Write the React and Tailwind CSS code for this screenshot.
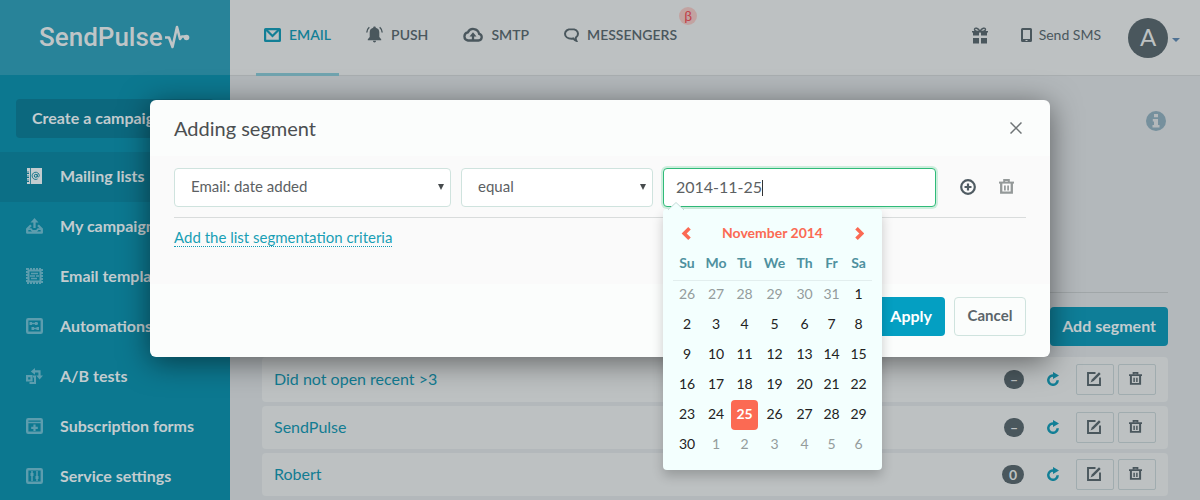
import React, { useState } from "react";

function MailIcon() {
  return (
    <svg width="17" height="14" viewBox="0 0 17 14" fill="none" stroke="currentColor" strokeWidth="2.200">
      <rect x="1.100" y="1.100" width="14.800" height="11.800" rx="0.5" />
      <path d="M2 1.500L8.500 8L15 1.500" />
    </svg>
  );
}

function BellIcon() {
  return (
    <svg width="17" height="17" viewBox="0 0 17 17" fill="currentColor">
      <path d="M8.500 0.500c.8 0 1.300.5 1.300 1.200c2.300.6 3.500 2.200 3.500 4.500v4.800l1.900 2.300v.9h-13.400v-.9l1.900-2.300v-4.800c0-2.300 1.200-3.900 3.500-4.500c0-.7.5-1.200 1.300-1.200z" />
      <path d="M7 14.800h3c0 .9-.6 1.600-1.500 1.600s-1.500-.7-1.500-1.600z" />
      <path d="M0.800 6.500c.1-2.200 1-3.900 2.500-5.200M16.200 6.500c-.1-2.200-1-3.900-2.500-5.200" fill="none" stroke="currentColor" strokeWidth="1.400" />
    </svg>
  );
}

function CloudIcon() {
  return (
    <svg width="20" height="15" viewBox="0 0 20 15" fill="none" stroke="currentColor" strokeWidth="2.300">
      <path d="M5 13.500h10.500a3.400 3.400 0 0 0 .6-6.700A6 6 0 0 0 4.800 5.400A4.100 4.100 0 0 0 5 13.500z" />
      <path d="M10 13V8" />
      <path d="M6.500 9.500L10 5.200l3.500 4.300z" fill="currentColor" stroke="none" />
    </svg>
  );
}

function ChatIcon() {
  return (
    <svg width="15" height="14" viewBox="0 0 15 14" fill="none" stroke="currentColor" strokeWidth="2">
      <path d="M7.500 1C3.700 1 1 3 1 5.800s2.700 4.900 6.500 4.900c.7 0 1.300 0 1.800-.2c.9 1.200 1.800 1.900 3 2.300c-.5-1-.7-1.900-.5-3.200C13.300 8.700 14 7.300 14 5.800C14 3 11.300 1 7.500 1z" />
    </svg>
  );
}

function GiftIcon() {
  return (
    <svg width="16" height="17" viewBox="0 0 16 17" fill="currentColor">
      <path d="M1 5h6v3.500H1zM9 5h6v3.500H9zM1 11h6v5.500H1zM9 11h6v5.500H9z" />
      <path d="M0 4.800h16M8 4.500C6.500 1 2.500 0 2.500 2.500C2.500 4 5 4.500 8 4.500C11 4.500 13.500 4 13.500 2.500C13.500 0 9.500 1 8 4.500z" fill="none" stroke="currentColor" strokeWidth="1.400" />
    </svg>
  );
}

function PhoneIcon() {
  return (
    <svg width="11" height="14" viewBox="0 0 11 14">
      <path fillRule="evenodd" fill="currentColor" d="M1.500 0h8A1.500 1.500 0 0 1 11 1.500v11A1.500 1.500 0 0 1 9.500 14h-8A1.500 1.500 0 0 1 0 12.500v-11A1.500 1.500 0 0 1 1.500 0zM2 2v9h7V2zM4.500 12v1h2v-1z" />
    </svg>
  );
}

function InfoIcon() {
  return (
    <svg width="20" height="20" viewBox="0 0 20 20">
      <circle cx="10" cy="10" r="10" fill="#76909d" />
      <path d="M8 3h4v3.300H8zM6.800 8h5.200v6h1.500v2.500h-7V14H8v-3.500H6.800z" fill="#b3b8bb" />
    </svg>
  );
}

function TrashIcon({ size = 15 }) {
  return (
    <svg width={size} height={size} viewBox="0 0 15 15" fill="none" stroke="currentColor">
      <path d="M0 3.600h15" strokeWidth="2" />
      <path d="M5.200 3V1h4.600v2" strokeWidth="2" />
      <path d="M2.200 4v9.700h10.600V4" strokeWidth="2.300" />
      <path d="M5.900 6.500v5M9.100 6.500v5" strokeWidth="1.700" />
    </svg>
  );
}

function EditIcon() {
  return (
    <svg width="14" height="14" viewBox="0 0 14 14" fill="none" stroke="currentColor" strokeWidth="1.900">
      <path d="M8.500 1H1v12h12V5.500" />
      <path d="M12 0.300l1.700 1.700l-7 7l-3.200 1.500l1.500-3.200z" fill="currentColor" stroke="none" />
    </svg>
  );
}

function RefreshIcon() {
  return (
    <svg width="12" height="14" viewBox="0 0 12 14">
      <path d="M10.700 8.300A4.700 4.700 0 1 1 7 3.500" fill="none" stroke="currentColor" strokeWidth="2.500" />
      <path d="M6 0l6 3.500L6 7z" fill="currentColor" />
    </svg>
  );
}

function ListIcon() {
  return (
    <svg width="17" height="16" viewBox="0 0 17 16">
      <path d="M1 0h15v16H1v-2h2v-1H1v-3h2V9H1V6h2V5H1z" fill="currentColor" />
      <path d="M4.500 0v16M0.500 4h2.500M0.500 8h2.500M0.500 12h2.500" stroke="#0c6f86" strokeWidth="0.800" />
      <circle cx="9.800" cy="7.800" r="1.500" fill="none" stroke="#0c6f86" strokeWidth="1" />
      <path d="M11.300 6.300v2.200c.3 1 2 .6 2-1a3.600 3.600 0 1 0-1.700 3.400" fill="none" stroke="#0c6f86" strokeWidth="0.900" />
    </svg>
  );
}

function CampaignIcon() {
  return (
    <svg width="17" height="16" viewBox="0 0 17 16" fill="none" stroke="currentColor" strokeWidth="2.300">
      <path d="M5 7.200L1.200 11v3.700h14.600V11L12 7.200" strokeLinejoin="round" />
      <path d="M1.500 11.200h3.500l1.500 1.800h4L12 11.200h3.500" strokeWidth="1.800" />
      <path d="M8.500 10V4" />
      <path d="M4.500 4.500L8.500 0l4 4.500z" fill="currentColor" stroke="none" />
    </svg>
  );
}

function TemplateIcon() {
  return (
    <svg width="17" height="16" viewBox="0 0 17 16" fill="none" stroke="currentColor">
      <path d="M1 1h15v14H1z" strokeWidth="2" strokeDasharray="2 1" />
      <path d="M2.500 2.500h12v11h-12z" strokeWidth="2" />
      <path d="M5 5.500h7M4 8h5M10 8h3M5 10.500h6" strokeWidth="1.600" />
    </svg>
  );
}

function AutomationIcon() {
  return (
    <svg width="17" height="16" viewBox="0 0 17 16" fill="none" stroke="currentColor">
      <rect x="1.200" y="1.200" width="14.600" height="13.600" rx="1" strokeWidth="2.400" />
      <path d="M4 5.500h8M6 10.500h7" strokeWidth="1.300" />
      <path d="M3.500 4h2.500v3H3.500zM9 4h2.500v3H9zM5.500 9h2.500v3H5.500zM10.500 9h2.500v3h-2.500z" fill="currentColor" stroke="none" />
    </svg>
  );
}

function TestIcon() {
  return (
    <svg width="17" height="16" viewBox="0 0 17 16" fill="none" stroke="currentColor" strokeWidth="2.200">
      <path d="M1.100 8.100h4.400v4.400H1.100z" />
      <path d="M3.500 15H9V8.500H7" strokeWidth="2" />
      <path d="M8 3.400h5.500V9" />
      <path d="M9 0v6.800L4.800 3.400zM10.200 7.500H17l-3.400 4z" fill="currentColor" stroke="none" />
    </svg>
  );
}

function FormIcon() {
  return (
    <svg width="17" height="16" viewBox="0 0 17 16" fill="none" stroke="currentColor">
      <rect x="1.200" y="1.200" width="14.600" height="13.600" rx="1" strokeWidth="2.400" />
      <path d="M2 4.500h13" strokeWidth="1.500" />
      <path d="M8.500 6.500v6.500M5.200 9.800h6.600" strokeWidth="2.200" />
    </svg>
  );
}

function SettingsIcon() {
  return (
    <svg width="17" height="16" viewBox="0 0 17 16" fill="none" stroke="currentColor">
      <rect x="1.200" y="1.200" width="14.600" height="13.600" rx="1" strokeWidth="2.400" />
      <path d="M6 3v10M11 3v10" strokeWidth="1.500" />
      <path d="M4.500 5h3v3h-3zM9.500 8h3v3h-3z" fill="currentColor" stroke="none" />
    </svg>
  );
}

const navItems = [
  { label: "Mailing lists", icon: ListIcon, active: true },
  { label: "My campaigns", icon: CampaignIcon },
  { label: "Email templates", icon: TemplateIcon },
  { label: "Automations", icon: AutomationIcon },
  { label: "A/B tests", icon: TestIcon },
  { label: "Subscription forms", icon: FormIcon },
  { label: "Service settings", icon: SettingsIcon },
];

const tabs = [
  { label: "EMAIL", icon: MailIcon, active: true },
  { label: "PUSH", icon: BellIcon },
  { label: "SMTP", icon: CloudIcon },
  { label: "MESSENGERS", icon: ChatIcon, beta: true },
];

const segments = [
  { name: "Did not open recent >3", count: "–" },
  { name: "SendPulse", count: "–" },
  { name: "Robert", count: "0" },
];

const weekDays = ["Su", "Mo", "Tu", "We", "Th", "Fr", "Sa"];

// 26 Oct - 6 Dec, six weeks starting on Sunday
const weeks = [
  [26, 27, 28, 29, 30, 31, 1],
  [2, 3, 4, 5, 6, 7, 8],
  [9, 10, 11, 12, 13, 14, 15],
  [16, 17, 18, 19, 20, 21, 22],
  [23, 24, 25, 26, 27, 28, 29],
  [30, 1, 2, 3, 4, 5, 6],
];

function Sidebar() {
  return (
    <aside className="w-[230px] shrink-0 bg-[#0c7890] text-[#c3cccf]">
      <a href="#" className="flex h-[75px] items-center gap-[2px] bg-[#288399] pb-[2px] pl-[39px] text-[#bfc5c7]">
        <span className="font-['Roboto'] text-[26px] leading-8 font-medium">SendPulse</span>
        <svg width="25" height="24" viewBox="0 0 25 24" fill="none" stroke="currentColor" strokeWidth="2.600" strokeLinejoin="round">
          <path d="M0 12.500h4L7.500 22L12 2l3 12l1.800-2.500H21" />
          <circle cx="21.500" cy="12.500" r="2.800" fill="currentColor" stroke="none" />
        </svg>
      </a>
      <div className="px-4 pt-6 pb-[14px]">
        <button className="h-[39px] w-full rounded bg-[#0c687e] px-4 pb-[2px] text-left text-base font-bold">
          Create a campaign
        </button>
      </div>
      <nav>
        {navItems.map(({ label, icon: Icon, active }) => (
          <a
            key={label}
            href="#"
            className={`flex h-[50px] items-center gap-[17px] pb-[2px] pl-[26px] text-base font-bold whitespace-nowrap ${active ? "bg-[#0c6f86]" : ""}`}
          >
            <span className={active ? "text-[#c3cccf]" : "text-[#5d9dae]"}>
              <Icon />
            </span>
            {label}
          </a>
        ))}
      </nav>
    </aside>
  );
}

function TopBar() {
  return (
    <header className="flex h-[76px] items-center justify-between border-b border-[#a9aeb0] bg-[#bdc1c2] pr-5 pl-[26px] text-[#4a575d]">
      <nav className="flex gap-[19px] self-stretch">
        {tabs.map(({ label, icon: Icon, active, beta }) => (
          <a
            key={label}
            href="#"
            className={`relative -mb-px flex items-center gap-2 border-b-3 px-2 pb-1 text-sm font-semibold ${
              active ? "border-[#70a4af] text-[#127f96]" : "border-transparent"
            }`}
          >
            <Icon />
            {label}
            {beta && (
              <span className="absolute top-[7px] -right-3 flex size-[18px] items-center justify-center rounded-full bg-[#c2a3a1] text-sm font-normal text-[#c0414a]">
                β
              </span>
            )}
          </a>
        ))}
      </nav>
      <div className="flex items-center">
        <button aria-label="Gifts" className="mr-[33px] pb-[5px]">
          <GiftIcon />
        </button>
        <a href="#" className="mr-[27px] flex items-center gap-[7px] pb-[6px] text-sm">
          <PhoneIcon />
          Send SMS
        </a>
        <button aria-label="Account" className="flex items-center gap-1">
          <span className="flex size-10 items-center justify-center rounded-full bg-[#4a575d] pb-[2px] text-2xl text-[#bdc1c2]">A</span>
          <svg width="8" height="4" viewBox="0 0 8 4" className="mt-1">
            <path d="M0 0h8L4 4z" fill="#4f7293" />
          </svg>
        </button>
      </div>
    </header>
  );
}

function SegmentRow({ name, count }) {
  return (
    <li className="flex h-[43px] items-center justify-between rounded bg-[#bdc1c2] px-3 first:h-[45px]">
      <a href="#" className="pb-[2px] text-base text-[#127c92]">
        {name}
      </a>
      <div className="flex items-center text-[#4a575d]">
        <span
          className={`flex h-[19px] items-center justify-center rounded-full bg-[#4a575d] text-sm font-bold text-[#bdc1c2] ${
            count === "–" ? "w-5" : "w-[22px]"
          }`}
        >
          {count}
        </span>
        <button aria-label="Refresh" className="mr-[17px] ml-[23px] pb-[2px] text-[#127f96]">
          <RefreshIcon />
        </button>
        <button aria-label="Edit" className="mr-1 flex h-[31px] w-[38px] items-center justify-center rounded-xs border border-[#a0acaf] pr-[2px] pb-[2px]">
          <EditIcon />
        </button>
        <button aria-label="Delete" className="flex h-[31px] w-[38px] items-center justify-center rounded-xs border border-[#a0acaf] pr-[3px] pb-[2px]">
          <TrashIcon size={13} />
        </button>
      </div>
    </li>
  );
}

function Calendar() {
  return (
    <div className="absolute top-full left-0 mt-[2px] w-[219px] rounded bg-[#f3fffe] px-[10px] pt-[9px] pb-[10px] shadow-[0_6px_12px_rgba(0,0,0,0.2)]">
      <svg width="18" height="9" viewBox="0 0 18 9" className="absolute -top-[7px] left-1">
        <path d="M1 8L9 0.500L17 8" fill="#f3fffe" stroke="#c3dbd7" />
        <path d="M2 8h14" stroke="#f3fffe" strokeWidth="2" />
      </svg>
      <div className="flex h-[30px] items-center justify-between px-2 text-[#fb6a53]">
        <button aria-label="Previous month">
          <svg width="10" height="13" viewBox="0 0 10 13" fill="none" stroke="currentColor" strokeWidth="3.600">
            <path d="M8.500 1.300L3.200 6.500l5.300 5.200" />
          </svg>
        </button>
        <span className="text-sm font-bold">November 2014</span>
        <button aria-label="Next month">
          <svg width="10" height="13" viewBox="0 0 10 13" fill="none" stroke="currentColor" strokeWidth="3.600">
            <path d="M2.500 1.300l5.300 5.200l-5.300 5.200" />
          </svg>
        </button>
      </div>
      <table className="w-full table-fixed text-center text-sm text-[#222]">
        <colgroup>
          <col className="w-[28px]" />
          <col className="w-[30px]" />
          <col className="w-[27px]" />
          <col className="w-[33px]" />
          <col className="w-[27px]" />
          <col className="w-[27px]" />
          <col className="w-[27px]" />
        </colgroup>
        <thead>
          <tr className="h-8 border-b border-[#e2eeee] text-[#4e919f]">
            {weekDays.map((day) => (
              <th key={day} className="p-0 pb-[2px] font-bold">
                {day}
              </th>
            ))}
          </tr>
        </thead>
        <tbody>
          {weeks.map((week, row) => (
            <tr key={row} className="h-[30px]">
              {week.map((day, col) => {
                const muted = (row === 0 && day > 7) || (row === 5 && day < 7);
                const selected = day === 25;
                return (
                  <td
                    key={col}
                    className={`rounded p-0 pb-[2px] ${muted ? "text-[#949c9c]" : ""} ${selected ? "bg-[#fb6a53] font-bold text-white" : ""}`}
                  >
                    {day}
                  </td>
                );
              })}
            </tr>
          ))}
        </tbody>
      </table>
    </div>
  );
}

function SelectBox({ label, options, className }) {
  return (
    <div className={`relative ${className}`}>
      <select
        aria-label={label}
        className="h-[39px] w-full appearance-none rounded border border-[#cfe3de] bg-white pr-6 pb-[2px] pl-4 text-[15px] text-[#5c6163]"
      >
        {options.map((option) => (
          <option key={option}>{option}</option>
        ))}
      </select>
      <svg width="6" height="6" viewBox="0 0 6 6" className="pointer-events-none absolute top-4 right-[7px]">
        <path d="M0 0h6L3 6z" fill="#474b4d" />
      </svg>
    </div>
  );
}

function SegmentDialog() {
  const [date, setDate] = useState("2014-11-25");

  return (
    <div
      role="dialog"
      aria-label="Adding segment"
      className="w-full max-w-[900px] rounded-md bg-[#fbfdfc] shadow-[0_5px_30px_rgba(0,0,0,0.5)]"
    >
      <div className="flex h-14 items-center justify-between px-6">
        <h2 className="text-xl text-[#4b4f51]">Adding segment</h2>
        <button aria-label="Close" className="mr-1 pb-px">
          <svg width="12" height="12" viewBox="0 0 12 12" fill="none" stroke="#6f7476" strokeWidth="1.500">
            <path d="M0.500 0.500l11 11M11.500 0.500l-11 11" />
          </svg>
        </button>
      </div>
      <div className="h-32 bg-[#fafafa] px-6 pt-3">
        <div className="flex gap-[10px] border-b border-[#d9dcdc] pb-[10px]">
          <SelectBox label="Field" options={["Email: date added"]} className="flex-[277]" />
          <SelectBox label="Condition" options={["equal", "not equal"]} className="flex-[192]" />
          <div className="relative flex-[273]">
            <input
              type="text"
              aria-label="Date"
              value={date}
              onChange={(e) => setDate(e.target.value)}
              className="h-[39px] w-full rounded border border-[#2fbb79] bg-white px-3 pb-[2px] text-base text-[#5c6163] ring-2 ring-[#cdeedd] outline-none"
            />
            <span className="pointer-events-none absolute top-3 left-[99px] h-4 w-px bg-[#333]" />
            <Calendar />
          </div>
          <div className="flex w-20 justify-end">
            <button aria-label="Add condition" className="flex w-[39px] items-center justify-center pb-[2px]">
              <svg width="16" height="16" viewBox="0 0 16 16" fill="none" stroke="#4f5b62" strokeWidth="2.200">
                <circle cx="8" cy="8" r="6.800" />
                <path d="M8 4.500v7M4.500 8h7" />
              </svg>
            </button>
            <button aria-label="Delete condition" className="flex w-[39px] items-center justify-center pb-[2px] text-[#949999]">
              <TrashIcon />
            </button>
          </div>
        </div>
        <a href="#" className="mt-[10px] inline-block border-b border-dotted border-[#129db5] text-[15px] leading-[18px] text-[#199fb5]">
          Add the list segmentation criteria
        </a>
      </div>
      <div className="flex justify-end gap-[9px] px-6 pt-[13px] pb-[21px]">
        <button className="h-[39px] rounded bg-[#049fc2] px-[13px] pb-[2px] text-base font-bold text-white">Apply</button>
        <button className="h-[39px] w-[72px] rounded border border-[#cfe3de] pb-[2px] text-[15px] font-bold text-[#5b656a]">
          Cancel
        </button>
      </div>
    </div>
  );
}

export default function App() {
  return (
    <div className="relative h-screen overflow-hidden bg-[#b3b8bb] font-['Lato',sans-serif]">
      <div className="flex min-h-full">
        <Sidebar />
        <div className="min-w-0 flex-1">
          <TopBar />
          <main className="px-8 pt-[35px]">
            <div className="flex h-[182px] justify-end border-b border-[#a0a6a8] pr-[2px]">
              <button aria-label="Help" className="self-start">
                <InfoIcon />
              </button>
            </div>
            <div className="flex justify-end pt-[14px] pb-[11px]">
              <button className="h-[39px] rounded bg-[#0e7e98] px-3 pb-[2px] text-base font-bold text-[#c3cccf]">Add segment</button>
            </div>
            <ul className="flex flex-col gap-1">
              {segments.map((segment) => (
                <SegmentRow key={segment.name} {...segment} />
              ))}
            </ul>
          </main>
        </div>
      </div>
      <div className="absolute inset-0 flex items-start justify-center px-4 pt-[100px]">
        <SegmentDialog />
      </div>
    </div>
  );
}
